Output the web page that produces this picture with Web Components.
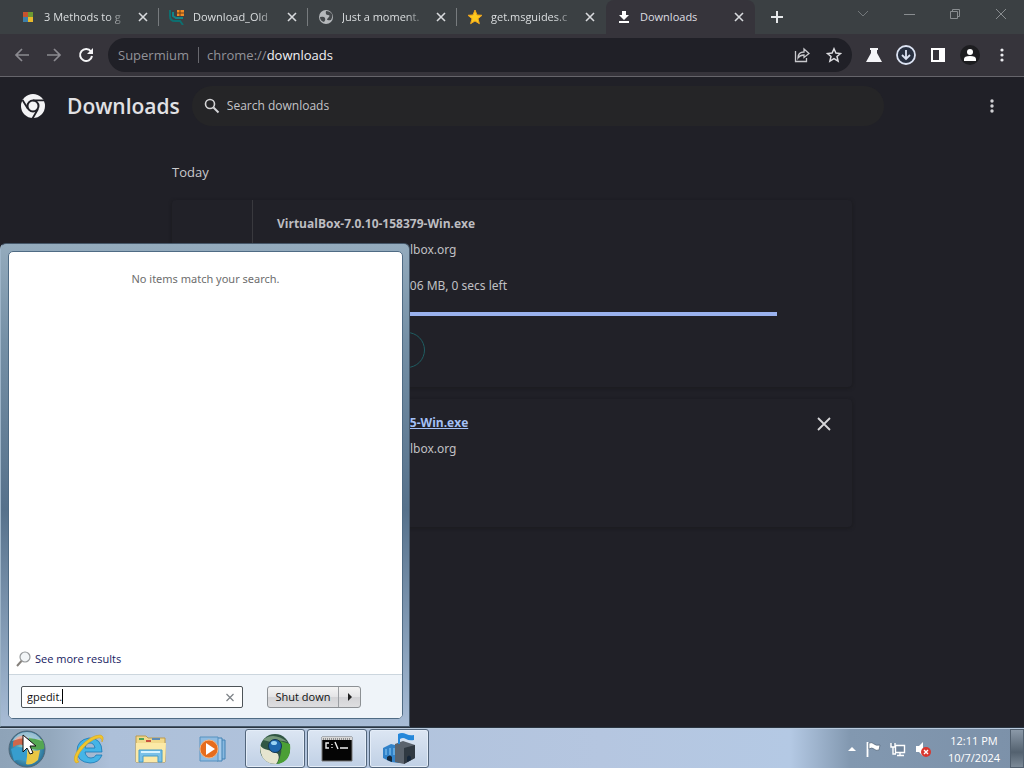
<!DOCTYPE html>
<html lang="en">
<head>
<meta charset="utf-8">
<title>Downloads</title>
<style>
  html, body { margin: 0; height: 100%; }
  body {
    background: #202027;
    font-family: "Open Sans", "Noto Sans", sans-serif;
    font-size: 12px;
    line-height: 16px;
    color: #d5d5d8;
  }
</style>
</head>
<body>
<win-desktop>
  <browser-window>
    <browser-tab slot="tabs" label="3 Methods to g">
      <svg width="16" height="16" viewBox="0 0 16 16"><path fill="#c6532f" d="M3 3h5v5H3z"/><path fill="#6f9a32" d="M8 3h5v5H8z"/><path fill="#3d7fa8" d="M3 8h5v5H3z"/><path fill="#e8b92c" d="M8 8h5v5H8z"/></svg>
    </browser-tab>
    <browser-tab slot="tabs" label="Download_Old">
      <svg width="16" height="16" viewBox="0 0 16 16"><path d="M1 1v6q0 5 5 5h5l3 4" fill="none" stroke="#0d6f70" stroke-width="2"/><path d="M4 3v4l3 2h7" fill="none" stroke="#128587" stroke-width="2"/><path fill="#f08a24" d="M8 1h7v6H8z"/><path d="M11 1v6M8 4h7" stroke="#6b3f17"/></svg>
    </browser-tab>
    <browser-tab slot="tabs" label="Just a moment.">
      <svg width="16" height="16" viewBox="0 0 16 16"><circle cx="8" cy="8" r="7" fill="#b5b8bb"/><path d="M2 8q4-1 5 1t-1 4q-4-1-4-5M8 2q-1 4 2 4t0 3 3 2q2-3 1-6-2-3-6-3" fill="#44484b"/></svg>
    </browser-tab>
    <browser-tab slot="tabs" label="get.msguides.c">
      <svg width="16" height="16" viewBox="0 0 16 16"><path fill="#fdca1e" stroke="#f0a51c" d="M8 1l2 5 5 .3-4 3.4 1.4 5L8 12l-4.4 2.7L5 9.7 1 6.300 6 6z"/></svg>
    </browser-tab>
    <browser-tab slot="tabs" label="Downloads" active>
      <svg width="16" height="16" viewBox="0 0 16 16"><path fill="#fff" d="M6 2h4v4h3l-5 5-5-5h3zM3 12h10v2H3z"/></svg>
    </browser-tab>
    <downloads-page>
      <download-item name="VirtualBox-7.0.10-158379-Win.exe" url="https://download.virtualbox.org" status="1.25 MB/s - 106 MB of 106 MB, 0 secs left" active></download-item>
      <download-item name="VirtualBox-6.1.4-136145-Win.exe" url="https://download.virtualbox.org"></download-item>
    </downloads-page>
  </browser-window>
  <start-menu slot="menu"></start-menu>
  <task-bar slot="bar"></task-bar>
</win-desktop>

<script>
function define(name, html, setup) {
  const template = document.createElement('template');
  template.innerHTML = `<style>
    * { box-sizing: border-box; }
    button { font: inherit; color: inherit; background: none; border: 0; padding: 0; }
    svg { display: block; flex: none; }
  </style>` + html;

  customElements.define(name, class extends HTMLElement {
    constructor() {
      super();
      this.attachShadow({ mode: 'open' });
      this.shadowRoot.appendChild(template.content.cloneNode(true));
    }

    connectedCallback() {
      if (setup) setup(this, this.shadowRoot);
    }
  });
}

define('win-desktop', `
  <style>
    :host { display: flex; flex-direction: column; min-height: 100vh; position: relative; overflow: hidden; }
    ::slotted(browser-window) { flex: 1; }
    .menu { position: absolute; left: 0; bottom: 41px; z-index: 2; }
  </style>
  <slot></slot>
  <div class="menu"><slot name="menu"></slot></div>
  <slot name="bar"></slot>
`);

define('browser-tab', `
  <style>
    :host {
      display: flex; align-items: center; flex: 0 1 149px; min-width: 0; height: 34px; box-sizing: border-box;
      padding: 0 10px; gap: 8px; font-size: 11px; color: #dcdfe1; position: relative;
    }
    :host([active]) { background: #36343b; border-radius: 8px 8px 0 0; color: #dedee2; }
    :host(:not([active]))::after { content: ''; position: absolute; right: 0; top: 8px; height: 18px; width: 1px; background: #777b7e; }
    :host([last])::after { display: none; }
    .title { flex: 1; overflow: hidden; white-space: nowrap; mask-image: linear-gradient(90deg, #000 75%, transparent); }
    :host([active]) .title { mask-image: none; }
  </style>
  <slot></slot>
  <span class="title"></span>
  <button aria-label="Close tab"><svg width="12" height="12" viewBox="0 0 12 12"><path d="M2 2l8 8M10 2l-8 8" stroke="#d8dadd" stroke-width="1.6"/></svg></button>
`, (host, root) => {
  root.querySelector('.title').textContent = host.getAttribute('label');
  const next = host.nextElementSibling;
  host.toggleAttribute('last', !!next && next.hasAttribute('active'));
});

define('browser-window', `
  <style>
    :host { display: flex; flex-direction: column; }
    .strip { display: flex; align-items: center; height: 34px; padding-left: 10px; background: #3b4043; }
    .strip > button { flex: none; margin-left: 15px; }
    .controls { display: flex; align-items: center; gap: 30px; margin-left: auto; padding: 0 15px 6px 0; }
    .bar { display: flex; align-items: center; height: 43px; padding: 0 14px; background: #36343b; border-bottom: 1px solid #66656b; }
    .nav { display: flex; gap: 16px; width: 94px; flex: none; }
    .omni { display: flex; align-items: center; flex: 1; height: 34px; min-width: 0; padding: 0 10px; border-radius: 17px; background: #202027; gap: 16px; font-size: 13px; }
    .chip { color: #929298; padding-right: 9px; border-right: 1px solid #68686e; margin-right: -8px; }
    .url { flex: 1; min-width: 0; color: #929298; }
    .url b { font-weight: 400; color: #f2f2f5; }
    .tools { display: flex; align-items: center; gap: 12px; padding-left: 12px; margin-right: -2px; }
    ::slotted(downloads-page) { flex: 1; }
  </style>
  <div class="strip">
    <slot name="tabs"></slot>
    <button aria-label="New tab"><svg width="14" height="14" viewBox="0 0 14 14"><path d="M7 1v12M1 7h12" stroke="#e6e8ea" stroke-width="2"/></svg></button>
    <div class="controls">
      <button aria-label="Search tabs"><svg width="16" height="16" viewBox="0 0 16 16"><path d="M3 5l5 5 5-5" fill="none" stroke="#73787b"/></svg></button>
      <button aria-label="Minimize"><svg width="16" height="16" viewBox="0 0 16 16"><path d="M3 8.5h11" stroke="#898d90"/></svg></button>
      <button aria-label="Restore"><svg width="16" height="16" viewBox="0 0 16 16"><path d="M3.500 5.500h7v7h-7zM5.500 5.500v-2h7v7h-2" fill="none" stroke="#898d90"/></svg></button>
      <button aria-label="Close"><svg width="16" height="16" viewBox="0 0 16 16"><path d="M3 3l10 10M13 3L3 13" stroke="#898d90"/></svg></button>
    </div>
  </div>
  <div class="bar">
    <div class="nav">
      <button aria-label="Back"><svg width="16" height="16" viewBox="0 0 16 16"><path d="M15 8H2M8 2L2 8l6 6" fill="none" stroke="#8b8a90" stroke-width="1.7"/></svg></button>
      <button aria-label="Forward"><svg width="16" height="16" viewBox="0 0 16 16"><path d="M1 8h13M8 2l6 6-6 6" fill="none" stroke="#8b8a90" stroke-width="1.7"/></svg></button>
      <button aria-label="Reload"><svg width="16" height="16" viewBox="0 0 16 16"><path d="M13 4.5A6 6 0 1 0 14 9" fill="none" stroke="#f4f4f6" stroke-width="2"/><path d="M15 1v6H9z" fill="#f4f4f6"/></svg></button>
    </div>
    <div class="omni">
      <span class="chip">Supermium</span>
      <span class="url">chrome://<b>downloads</b></span>
      <button aria-label="Share"><svg width="16" height="16" viewBox="0 0 16 16"><path d="M1.500 4v10.500h11V11M4 11q0-6 6-6V2l5 4.500-5 4V8q-4 0-6 3z" fill="none" stroke="#c9c9cd" stroke-width="1.3"/></svg></button>
      <button aria-label="Bookmark"><svg width="16" height="16" viewBox="0 0 16 16"><path d="M8 1.800l1.900 4.300 4.600.4-3.500 3 1.100 4.600L8 11.700l-4.100 2.400L5 9.500l-3.500-3 4.600-.4z" fill="none" stroke="#dcdce0" stroke-width="1.5"/></svg></button>
    </div>
    <div class="tools">
      <button aria-label="Experiments"><svg width="20" height="20" viewBox="0 0 20 20"><path d="M6 3h8v2h-1v3l5 9H2l5-9V5H6z" fill="#f5f5f8"/></svg></button>
      <button aria-label="Downloads"><svg width="20" height="20" viewBox="0 0 20 20"><circle cx="10" cy="10" r="9" fill="#283040" stroke="#dce3f3" stroke-width="1.8"/><path d="M10 5v9M6 10l4 4 4-4" fill="none" stroke="#dce3f3" stroke-width="1.8"/></svg></button>
      <button aria-label="Side panel"><svg width="20" height="20" viewBox="0 0 20 20"><path fill-rule="evenodd" d="M3 3h14v14H3zM5 5v10h6V5z" fill="#fff"/></svg></button>
      <button aria-label="Profile"><svg width="20" height="20" viewBox="0 0 20 20"><circle cx="10" cy="10" r="10" fill="#1d1d20"/><circle cx="10" cy="7" r="3" fill="#fff"/><path d="M4 16v-2q0-3 6-3t6 3v2z" fill="#fff"/></svg></button>
      <button aria-label="Menu"><svg width="20" height="20" viewBox="0 0 20 20"><g fill="#ececf0"><circle cx="10" cy="5" r="1.6"/><circle cx="10" cy="10" r="1.6"/><circle cx="10" cy="15" r="1.6"/></g></svg></button>
    </div>
  </div>
  <slot></slot>
`);

define('downloads-page', `
  <style>
    :host { display: block; background: #202027; }
    header { display: flex; align-items: center; height: 58px; padding: 0 22px 0 20px; }
    h1 { margin: 0 12px 0 21px; font-size: 21px; line-height: 28px; font-weight: 600; color: #e1e1e4; }
    label { display: flex; align-items: center; gap: 7px; flex: 0 1 692px; height: 40px; padding: 0 12px; border-radius: 20px; background: #252527; }
    input { flex: 1; border: 0; outline: 0; padding: 0; background: none; font: inherit; color: inherit; }
    input::placeholder { color: #c4c4c7; opacity: 1; }
    header > button { margin-left: auto; }
    main { max-width: 680px; margin: 0 auto; padding: 28px 0; }
    h2 { margin: 0 0 19px; font-size: 13px; line-height: 18px; font-weight: 400; color: #c9c9cc; }
    .list { display: grid; gap: 12px; }
  </style>
  <header>
    <svg width="26" height="26" viewBox="0 0 26 26"><circle cx="13" cy="13" r="12" fill="#f3f3f5"/><circle cx="13" cy="13" r="5.5" fill="#f3f3f5" stroke="#202027" stroke-width="2"/><path d="M13 7.300h11M8 16L2.500 7M18 16l-5.500 9.500" stroke="#202027" stroke-width="1.8"/></svg>
    <h1>Downloads</h1>
    <label>
      <svg width="16" height="16" viewBox="0 0 16 16"><circle cx="6" cy="6" r="4.5" fill="none" stroke="#d4d4d6" stroke-width="1.6"/><path d="M9.500 9.500l5 5" stroke="#d4d4d6" stroke-width="2"/></svg>
      <input type="text" placeholder="Search downloads" aria-label="Search downloads">
    </label>
    <button aria-label="More actions"><svg width="20" height="20" viewBox="0 0 20 20"><g fill="#d0d0d4"><circle cx="10" cy="5" r="1.7"/><circle cx="10" cy="10" r="1.7"/><circle cx="10" cy="15" r="1.7"/></g></svg></button>
  </header>
  <main>
    <h2>Today</h2>
    <div class="list"><slot></slot></div>
  </main>
`);

define('download-item', `
  <style>
    :host { display: flex; min-height: 128px; background: #212128; box-shadow: 0 1px 3px 1px #1c1c21; border-radius: 4px; }
    :host([active]) { min-height: 186px; }
    .icon { flex: none; width: 81px; }
    :host([active]) .icon { border-right: 1px solid #39393e; }
    .body { flex: 1; min-width: 0; padding: 16px 0 16px 24px; white-space: nowrap; }
    .name { font-weight: 700; display: block; color: #bdbdc1; }
    a.name { color: #a4c0f5; }
    .url, .status { font-family: "Noto Sans", "Open Sans", sans-serif; color: #c0c0c4; }
    .url { margin-top: 10px; }
    .status { margin-top: 20px; }
    progress { display: block; width: 500px; max-width: 100%; height: 4px; margin: 18px 0 16px; border: 0; appearance: none; background: #33436a; }
    progress::-webkit-progress-bar { background: #33436a; }
    progress::-webkit-progress-value { background: #9ab2ee; }
    .body button { width: 70px; height: 36px; margin-right: 8px; border: 1px solid #1f5d62; border-radius: 18px; }
    .remove { align-self: flex-start; margin: 16px 20px; }
  </style>
  <div class="icon"></div>
  <div class="body"></div>
`, (host, root) => {
  const active = host.hasAttribute('active');
  const name = host.getAttribute('name');
  const url = host.getAttribute('url');
  const body = root.querySelector('.body');
  body.innerHTML = active
    ? `<span class="name">${name}</span>
       <div class="url">${url}</div>
       <div class="status">${host.getAttribute('status')}</div>
       <progress max="100" value="100" aria-label="Download progress"></progress>
       <button aria-label="Pause"></button><button aria-label="Cancel"></button>`
    : `<a class="name" href="#">${name}</a>
       <div class="url">${url}</div>`;
  if (!active) {
    body.insertAdjacentHTML('afterend', `<button class="remove" aria-label="Remove from list">
      <svg width="16" height="18" viewBox="0 0 16 18"><path d="M2 3l12 12M14 3L2 15" stroke="#d6d6d9" stroke-width="1.8"/></svg></button>`);
  }
});

define('start-menu', `
  <style>
    :host {
      display: block; box-sizing: border-box; width: 410px; padding: 7px 6px 7px 7px;
      border: 1px solid #46586a; border-left-color: #9db4c8; border-radius: 6px 6px 0 0;
      background: linear-gradient(#94abbd, #7590a6 20%, #56718b 55%, #8ba3bd 85%, #a8bcd6);
    }
    .panel { display: flex; flex-direction: column; height: 468px; border: 1px solid #4f6b84; border-radius: 5px; background: #fff; overflow: hidden; font-size: 11px; }
    .results { flex: 1; display: flex; flex-direction: column; justify-content: space-between; padding: 19px 7px 7px; }
    p { margin: 0; text-align: center; font-family: "Noto Sans", "Open Sans", sans-serif; color: #6d6d6d; }
    a { display: flex; align-items: center; gap: 4px; color: #15205f; text-decoration: none; }
    .foot { display: flex; align-items: center; gap: 24px; height: 44px; padding: 0 12px; background: #eff4f9; border-top: 1px solid #ccd6de; }
    .search { display: flex; align-items: center; width: 222px; height: 22px; padding: 0 6px 0 5px; border: 1px solid #4d5358; border-radius: 2px; background: #fff; }
    input { field-sizing: content; max-width: 190px; padding: 0; border: 0; outline: 0; background: none; font: inherit; color: #111; caret-color: transparent; }
    .caret { width: 1px; height: 15px; background: #000; }
    .search button { margin-left: auto; }
    .power { display: flex; height: 22px; border: 1px solid #8c9094; border-radius: 3px; color: #111; background: linear-gradient(#f4f4f4, #e4e4e6 50%, #d3d3d6 50%, #dedee0); }
    .power button { width: 70px; }
    .power .more { display: grid; place-items: center; width: 22px; border-left: 1px solid #9b9ea2; }
  </style>
  <div class="panel">
    <div class="results">
      <p>No items match your search.</p>
      <a href="#"><svg width="15" height="16" viewBox="0 0 15 16"><circle cx="9" cy="6" r="5" fill="#f2f5f7" stroke="#979a9c" stroke-width="1.2"/><path d="M5.500 10L1 15" stroke="#85807b" stroke-width="2"/></svg>See more results</a>
    </div>
    <div class="foot">
      <div class="search">
        <input type="text" value="gpedit." aria-label="Search programs and files">
        <span class="caret"></span>
        <button aria-label="Clear"><svg width="12" height="12" viewBox="0 0 12 12"><path d="M2.500 3l7 7M9.500 3l-7 7" stroke="#7d8287" stroke-width="1.2"/></svg></button>
      </div>
      <div class="power">
        <button>Shut down</button>
        <button class="more" aria-label="More power options"><svg width="8" height="8" viewBox="0 0 8 8"><path d="M2 0l4 4-4 4z" fill="#222"/></svg></button>
      </div>
    </div>
  </div>
`);

define('task-bar', `
  <style>
    :host {
      display: flex; align-items: stretch; height: 40px; box-sizing: border-box; border-top: 1px solid #b9cadd;
      background: linear-gradient(90deg, #8ea3b8 0, #93a8bd 50px, #adc0d9 110px, #b5c6e0 600px, #b4c9e4 790px, #8298b0 850px, #7c91a9);
      outline: 1px solid #2a3542;
    }
    .apps { display: flex; padding-left: 5px; gap: 18px; align-items: center; }
    .apps button { width: 44px; display: grid; place-items: center; }
    .open { display: flex; gap: 2px; margin-left: 10px; }
    .open button { width: 60px; display: grid; place-items: center; border: 1px solid #52657b; border-radius: 3px; background: linear-gradient(#dce6f3, #c0d0e5); box-shadow: inset 0 0 0 1px #e4edf8; }
    .tray { display: flex; align-items: center; gap: 9px; margin-left: auto; }
    .clock { display: grid; width: 54px; margin-left: 6px; font-size: 11px; text-align: center; color: #fff; line-height: 17px; white-space: nowrap; }
    .peek { align-self: stretch; width: 14px; border: 1px solid #52606f; background: linear-gradient(#8b99a8, #53616f 60%, #7c8a98); }
  </style>
  <div class="apps">
    <button aria-label="Start"><svg width="38" height="38" viewBox="0 0 38 38">
      <defs><radialGradient id="orb"><stop offset="0" stop-color="#e8f3c9"/><stop offset=".6" stop-color="#4b9ebb"/><stop offset="1" stop-color="#2a7198"/></radialGradient></defs>
      <circle cx="19" cy="19" r="18" fill="url(#orb)" stroke="#536877"/>
      <path d="M5 12Q12 2 20 8v9Q12 12 5 17z" fill="#d0674c"/><path d="M21 7q6 3 13 2 3 6 2 10-8 2-15-1z" fill="#54a652"/><path d="M3 19q7-4 16 0v13Q12 28 6 31z" fill="#379dce"/><path d="M20 19q6 3 12 1l-2 10q-7 6-12 4z" fill="#e9c744"/>
      <path d="M4 11Q9 2 19 2t15 9Q19 5 4 11z" fill="#fff" opacity=".5"/>
      <path d="M15 5v17l4-4 3 6 3-1-3-7h6z" fill="#fff" stroke="#111"/></svg></button>
    <button aria-label="Internet Explorer"><svg width="34" height="34" viewBox="0 0 34 34"><path fill-rule="evenodd" d="M30 20H13q1 6 6 6 4 0 5-3h6q-3 8-12 8Q5 30 5 19T17 6q13 0 13 14zM13 16h10q-1-5-5-5t-5 5z" fill="#45b4e6" stroke="#1b78b5" stroke-width=".8"/><path d="M4 31Q-1 27 8 15 19 3 28 3q5 1 2 7 0-5-4-4Q17 8 8 20q-5 8-1 10z" fill="#f1c62d" stroke="#d9a41c" stroke-width=".6"/></svg></button>
    <button aria-label="Windows Explorer"><svg width="34" height="34" viewBox="0 0 34 34"><path d="M2 4h10l2 2h17v24H2z" fill="#f1d98c" stroke="#bd9a4b"/><path d="M5 6h5v2H5z" fill="#4da45b"/><path d="M12 8h5v2h-5z" fill="#c9523d"/><path d="M18 6h8v2h-8z" fill="#5f8cb4"/><path d="M2 11h30l-1 19H2z" fill="#fbe9a7"/><path d="M5 18h23v12h-4v-6H9v6H5z" fill="#79c0e8" stroke="#429bc9"/><path d="M7 20h19" stroke="#d7f3ff" stroke-width="2"/></svg></button>
    <button aria-label="Media Player"><svg width="34" height="34" viewBox="0 0 34 34"><path d="M24 8h5v19h-5z" fill="#88b8df" stroke="#4182b5"/><path d="M21 6h5v23h-5z" fill="#a7cbea" stroke="#4182b5"/><path d="M4 5h18v24H4z" fill="#90bce1" stroke="#5792c0"/><circle cx="13" cy="17" r="9" fill="#e66c1c" stroke="#f6b47d"/><path d="M10 11v12l9-6z" fill="#fff"/></svg></button>
  </div>
  <div class="open">
    <button aria-label="Supermium"><svg width="34" height="34" viewBox="0 0 34 34"><circle cx="17" cy="17" r="15" fill="#315744"/><path d="M19 32Q34 30 32 12L22 9q4 10-3 23z" fill="#4b9f35"/><path d="M2 13q2 4 8 5t10 4q2 5-2 10Q2 32 2 13z" fill="#e6e5cf"/><path d="M5 8Q15-1 30 10q-10-3-17 0z" fill="#75987a"/><circle cx="17" cy="14" r="6.5" fill="#1f68ae" stroke="#123554"/><ellipse cx="16" cy="11" rx="3" ry="2" fill="#9bd4f4"/></svg></button>
    <button aria-label="Command Prompt"><svg width="32" height="26" viewBox="0 0 32 26"><path d="M1 1h30v24H1z" fill="#050505" stroke="#777"/><path d="M1 1h30v3H1z" fill="#d7d7d7"/><path d="M2 3h28" stroke="#444" stroke-dasharray="1 1"/><path d="M8 7H5v5h3M11 8v1M11 11v1M14 6l3 7M19 12h8" fill="none" stroke="#eee" stroke-width="1.4"/></svg></button>
    <button aria-label="Server"><svg width="34" height="34" viewBox="0 0 34 34"><path d="M1 16l8-4 8 2v17l-8-1-8-4z" fill="#3182c9"/><path d="M13 12l8-3 12 4v13l-11 6-9-2z" fill="#5b636d"/><path d="M22 16l11-3v13l-11 6z" fill="#303942"/><path d="M4 17v6M8 16v7M12 16v7" stroke="#8ecdf7"/><path d="M5 28v-3q3-3 5 0v5M25 30v-5q2-3 4 0v3" fill="#16273a"/><path d="M16 12V2q4-2 8 0t8 1v5q-5 1-8-1t-6 0v5z" fill="#2487da"/></svg></button>
  </div>
  <div class="tray">
    <svg width="8" height="8" viewBox="0 0 8 8"><path d="M0 6l4-4 4 4z" fill="#fff"/></svg>
    <svg width="16" height="18" viewBox="0 0 16 18"><path d="M2.500 2v15" stroke="#fff" stroke-width="1.8"/><path d="M4 3q3-1 5 1t6 1l-1 5q-3 1-5-1t-5 0z" fill="#fff" stroke="#435467" stroke-width=".6"/></svg>
    <svg width="16" height="16" viewBox="0 0 16 16"><path d="M5.500 4.500h9v7h-9zM7 14.500h7M10 12v2M1 2v4h4V2M3 6v7h3" fill="#70849b" stroke="#fff" stroke-width="1.4"/></svg>
    <svg width="17" height="16" viewBox="0 0 17 16"><path d="M1 5h3l4-4v14l-4-4H1z" fill="#fff"/><circle cx="11" cy="11" r="5" fill="#d9362e"/><path d="M9 9l4 4M13 9l-4 4" stroke="#fff" stroke-width="1.4"/></svg>
    <div class="clock"><span>12:11 PM</span><span>10/7/2024</span></div>
    <button class="peek" aria-label="Show desktop"></button>
  </div>
`);
</script>
</body>
</html>
